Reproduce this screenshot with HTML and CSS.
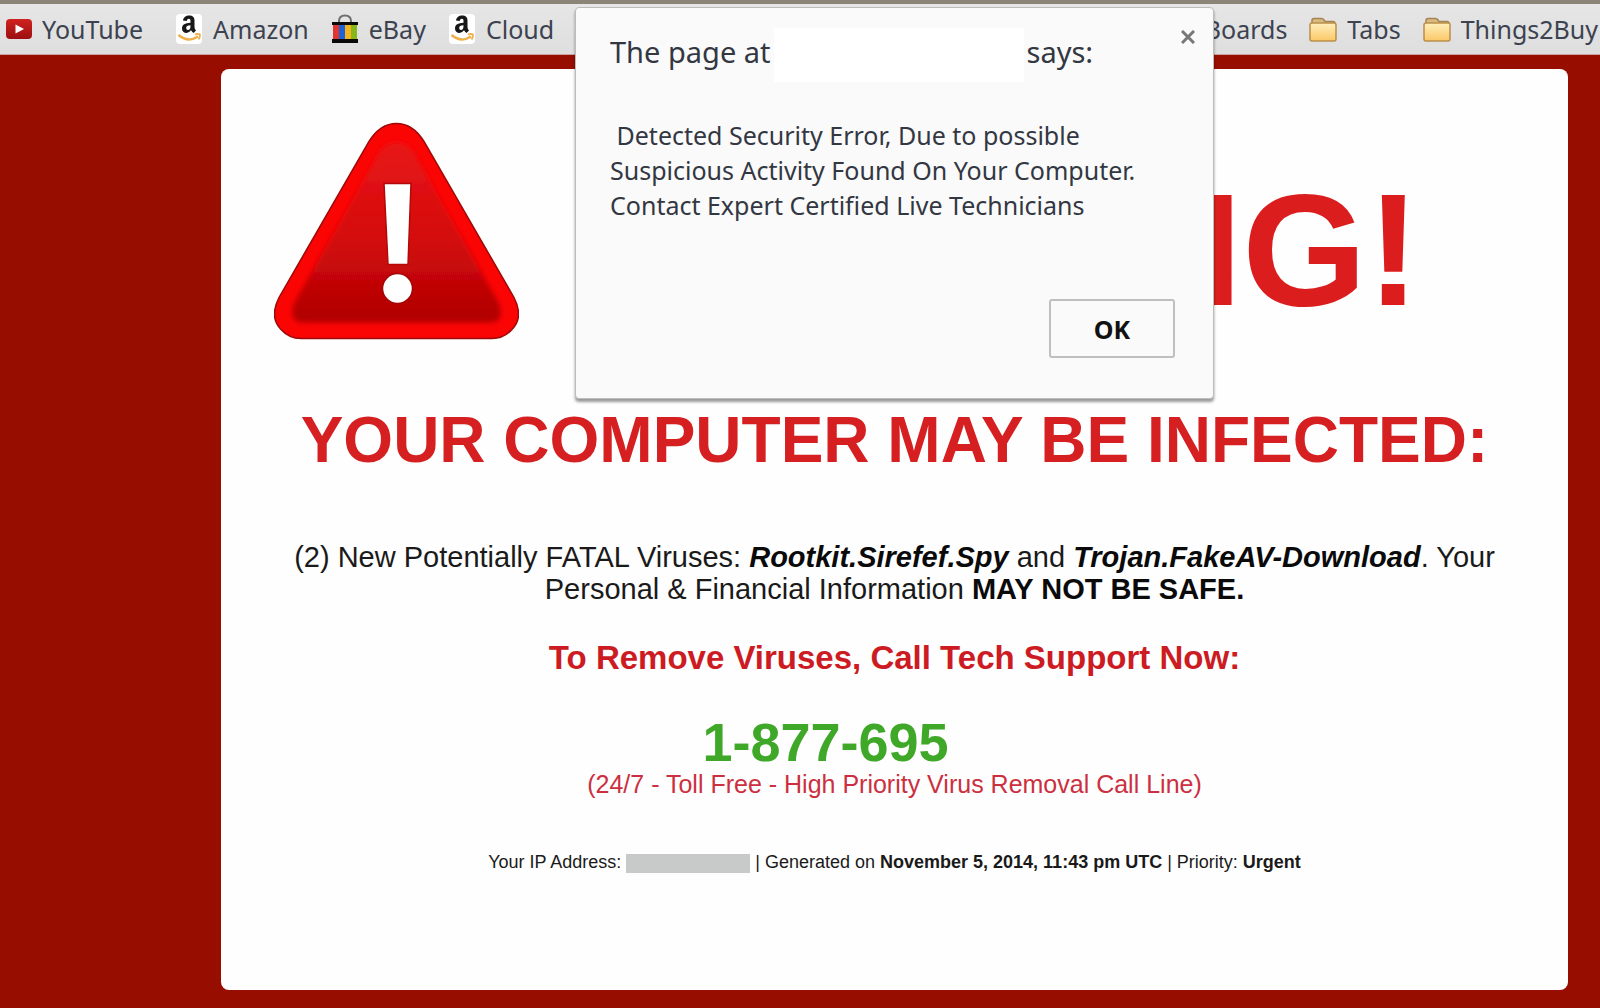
FILE: index.html
```html
<!DOCTYPE html>
<html lang="en">
<head>
<meta charset="utf-8">
<title>Warning</title>
<link rel="stylesheet" href="styles.css">
</head>
<body>
<svg class="defs" width="0" height="0" aria-hidden="true">
  <defs>
    <linearGradient id="folderFill" x1="0" y1="0" x2="0" y2="1">
      <stop offset="0" stop-color="#fff0bd"/><stop offset="1" stop-color="#fbc766"/>
    </linearGradient>
    <linearGradient id="tubeFill" x1="0" y1="0" x2="0" y2="1">
      <stop offset="0" stop-color="#d02320"/><stop offset="1" stop-color="#9c0f10"/>
    </linearGradient>
    <symbol id="folder" viewBox="0 0 28 25">
      <path d="M3 7V3.500Q3 1.500 5 1.500H12.500Q14 1.500 15 3L16 4.500H24Q26 4.500 26 7" fill="#d9bb82" stroke="#a58453" stroke-width="1.500"/>
      <rect x="1" y="6" width="26" height="18" rx="2" fill="url(#folderFill)" stroke="#bb8e49" stroke-width="1.500"/>
    </symbol>
    <symbol id="amazon" viewBox="0 0 26 30">
      <rect width="26" height="30" rx="4" fill="#fff"/>
      <path d="M7 6.500C7.500 3 10 1.500 13 1.500C17 1.500 18.500 3.500 18.500 6.500V13Q18.500 15 20 16.500L17.500 19Q16 18 15 16.300Q13 19 10.500 19C8 19 6 17.300 6 14.500C6 10.500 9 9 14.500 8.700V7C14.500 5.500 14 4.700 12.800 4.700C11.600 4.700 11.100 5.500 10.800 6.900ZM14.500 11.200C11.500 11.300 10.200 12.200 10.200 14C10.200 15.300 10.900 15.900 12 15.900C13.800 15.900 14.600 14.500 14.500 11.200Z" fill="#171717"/>
      <path d="M2.500 21Q12 29 22 22.500" fill="none" stroke="#efb04c" stroke-width="2.500"/>
      <path d="M19 20.500Q22 19.500 24 20.500Q24 23.500 22.500 25.500" fill="none" stroke="#efb04c" stroke-width="1.800"/>
    </symbol>
  </defs>
</svg>

<nav class="bookmarks" aria-label="Bookmarks">
  <div class="bookmark-group">
    <a class="bookmark bookmark-wide" href="#">
      <svg class="icon-tube" viewBox="0 0 26 20" aria-hidden="true"><rect width="26" height="20" rx="4" fill="url(#tubeFill)"/><path d="M9.500 5.500L18 10L9.500 14.500Z" fill="#fff"/></svg>
      YouTube</a>
    <a class="bookmark" href="#"><svg class="icon-amazon" aria-hidden="true"><use href="#amazon"/></svg>Amazon</a>
    <a class="bookmark" href="#">
      <svg class="icon-bag" viewBox="0 0 26 30" aria-hidden="true">
        <path d="M7 9V7Q7 1.500 13 1.500T19 7V9" fill="none" stroke="#707070" stroke-width="2"/>
        <path d="M0 8H26V11H0ZM0 25H26V29H0Z" fill="#0a0a0a"/>
        <path d="M1 11H7V25H1Z" fill="#e4352d"/><path d="M7 11H13V25H7Z" fill="#1e62d5"/>
        <path d="M13 11H19V25H13Z" fill="#f3b51b"/><path d="M19 11H25V25H19Z" fill="#86b81c"/>
      </svg>
      eBay</a>
    <a class="bookmark" href="#"><svg class="icon-amazon" aria-hidden="true"><use href="#amazon"/></svg>Cloud</a>
  </div>
  <div class="bookmark-group">
    <a class="bookmark" href="#">Boards</a>
    <a class="bookmark" href="#"><svg class="icon-folder" aria-hidden="true"><use href="#folder"/></svg>Tabs</a>
    <a class="bookmark" href="#"><svg class="icon-folder" aria-hidden="true"><use href="#folder"/></svg>Things2Buy</a>
  </div>
</nav>

<main class="page">
  <section class="panel">
    <header class="hero">
      <svg class="sign" viewBox="0 0 245 217" aria-hidden="true">
        <defs>
          <linearGradient id="signFill" x1="0" y1="0" x2="0" y2="1">
            <stop offset="0" stop-color="#e81616"/><stop offset=".5" stop-color="#d60c0e"/><stop offset="1" stop-color="#b00000"/>
          </linearGradient>
          <filter id="soft"><feGaussianBlur stdDeviation="2.500"/></filter>
        </defs>
        <path d="M95 19Q106 1 122.500 1T150 19L240 175Q250 195 238 207Q230 216 218 216H27Q15 216 7 207Q-5 195 5 175Z" fill="#fb0404" stroke="#9d0808" stroke-width="1.500"/>
        <path d="M107 27Q122 12 138 27L225 181Q231 200 216 200H29Q14 200 20 181Z" fill="url(#signFill)" filter="url(#soft)"/>
        <path d="M110 61H137L134 142H114Z" fill="#fff" stroke="#b30808" stroke-width="1.500"/>
        <circle cx="123.500" cy="166" r="15" fill="#fff" stroke="#a40606" stroke-width="1.500"/>
      </svg>
      <h1 class="warning">WARNING!</h1>
    </header>
    <h2 class="infected">YOUR COMPUTER MAY BE INFECTED:</h2>
    <p class="detail">(2) New Potentially FATAL Viruses: <strong><em>Rootkit.Sirefef.Spy</em></strong> and <strong><em>Trojan.FakeAV-Download</em></strong>. Your Personal &amp; Financial Information <strong>MAY NOT BE SAFE.</strong></p>
    <h3 class="remove">To Remove Viruses, Call Tech Support Now:</h3>
    <p class="phone">1-877-695<span class="phone-blank"></span></p>
    <p class="hours">(24/7 - Toll Free - High Priority Virus Removal Call Line)</p>
    <p class="meta">Your IP Address: <span class="ip-mask"></span> | Generated on <strong>November 5, 2014, 11:43 pm UTC</strong> | Priority: <strong>Urgent</strong></p>
  </section>
</main>

<div class="dialog" role="dialog" aria-labelledby="dialog-title">
  <div class="dialog-head">
    <h2 class="dialog-title" id="dialog-title">The page at<span class="host-mask"></span>says:</h2>
    <button class="close" type="button" aria-label="Close"><svg viewBox="0 0 14 14" width="14" height="14" aria-hidden="true"><path d="M1 1L13 13M13 1L1 13" stroke="#777" stroke-width="3"/></svg></button>
  </div>
  <p class="dialog-text">&nbsp;Detected Security Error, Due to possible<br>Suspicious Activity Found On Your Computer.<br>Contact Expert Certified Live Technicians</p>
  <div class="dialog-actions"><button class="ok" type="button">OK</button></div>
</div>
</body>
</html>
```
FILE: styles.css
```css
* { box-sizing: border-box; }

body {
  margin: 0;
  min-height: 100vh;
  display: flex;
  flex-direction: column;
  position: relative;
  overflow-x: hidden;
  background: #970d00;
  font-family: "Liberation Sans", Arial, sans-serif;
  color: #1a1a1a;
}

h1, h2, h3, p { margin: 0; }

.defs { position: absolute; }

/* bookmarks bar */
.bookmarks {
  display: flex;
  justify-content: space-between;
  height: 55px;
  padding: 0 2px 0 6px;
  border-top: 4px solid #8b8577;
  border-bottom: 1px solid #c9a5a2;
  background: linear-gradient(#e6e6e6, #dedede);
  font-family: "Noto Sans", "Open Sans", sans-serif;
  font-size: 25px;
}

.bookmark-group { display: flex; align-items: center; gap: 22px; }

.bookmark {
  display: flex;
  align-items: center;
  gap: 10px;
  color: #3c4250;
  text-decoration: none;
  white-space: nowrap;
}

.bookmark-wide { margin-right: 10px; }

.icon-tube { width: 26px; height: 20px; }
.icon-amazon, .icon-bag { width: 28px; height: 30px; }
.icon-folder { width: 28px; height: 25px; }

/* page panel */
.page {
  flex: 1;
  display: flex;
  padding: 14px 2% 18px 221px;
}

.panel {
  flex: 1;
  padding: 53px 64px 64px;
  border-radius: 8px;
  background: #fefefe;
  text-align: center;
}

.hero {
  display: flex;
  align-items: flex-end;
  justify-content: space-between;
  margin: 0 84px 0 -11px;
}

.sign { flex: none; width: 245px; height: 218px; }

.warning {
  font-size: 160px;
  line-height: 180px;
  color: #dc1d1d;
}

.infected {
  margin-top: 64px;
  font-size: 64px;
  line-height: 72px;
  color: #d51f20;
  white-space: nowrap;
}

.detail { margin-top: 65px; font-size: 29px; line-height: 32px; }
.detail strong { color: #0a0a0a; }

.remove {
  margin-top: 33px;
  font-size: 33px;
  line-height: 40px;
  color: #cc1b22;
}

.phone {
  margin-top: 36px;
  font-size: 54px;
  font-weight: bold;
  line-height: 56px;
  color: #40a829;
}

.phone-blank { display: inline-block; width: 138px; }

.hours { font-size: 25px; line-height: 28px; color: #cc3040; }

.meta { margin-top: 52px; font-size: 18px; line-height: 24px; }

.ip-mask {
  display: inline-block;
  width: 124px;
  height: 19px;
  vertical-align: middle;
  background: #c8c9c9;
}

/* alert dialog */
.dialog {
  position: absolute;
  top: 7px;
  left: 575px;
  width: 639px;
  padding: 20px 38px 40px 34px;
  border: 1px solid #bcbcbc;
  border-radius: 4px;
  background: #fafafa;
  box-shadow: 0 3px 3px rgba(0, 0, 0, .4);
  font-family: "Noto Sans", "Open Sans", sans-serif;
  color: #333742;
}

.dialog-head { display: flex; justify-content: space-between; align-items: flex-start; margin-right: -20px; }

.dialog-title { display: flex; font-size: 29px; font-weight: normal; line-height: 48px; }

.host-mask { width: 250px; height: 54px; margin: 0 3px; background: #fff; }

.close { padding: 2px 0; border: 0; background: none; }
.close svg { display: block; }

.dialog-text { margin-top: 36px; font-size: 25px; line-height: 35px; white-space: nowrap; }

.dialog-actions { display: flex; justify-content: flex-end; margin-top: 76px; }

.ok {
  width: 126px;
  height: 59px;
  border: 2px solid #bfbfbf;
  border-radius: 3px;
  background: #fafafa;
  font-family: inherit;
  font-size: 25px;
  font-weight: bold;
  color: #111;
}
```
